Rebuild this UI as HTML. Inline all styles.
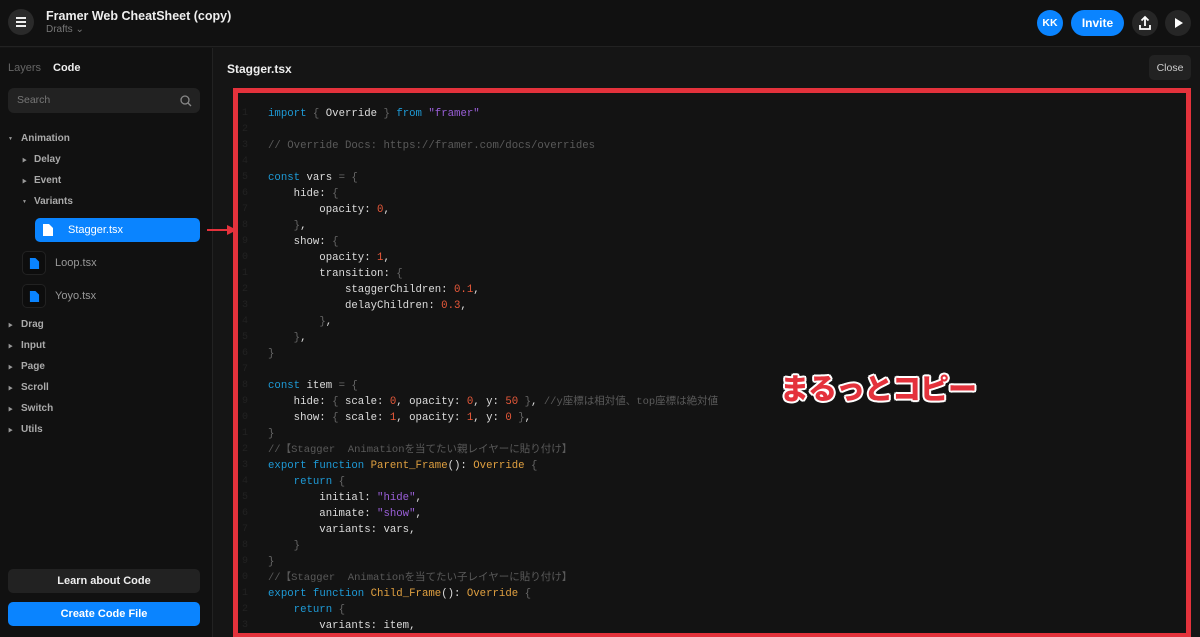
<!DOCTYPE html>
<html><head><meta charset="utf-8">
<style>
*{margin:0;padding:0;box-sizing:border-box}
body{width:1200px;height:637px;overflow:hidden;background:#151515;font-family:"Liberation Sans","Noto Sans CJK JP",sans-serif;color:#ddd;position:relative}
.top{position:absolute;left:0;top:0;width:1200px;height:47px;background:#111;border-bottom:1px solid #222}
.menu{position:absolute;left:8px;top:9px;width:26px;height:26px;border-radius:13px;background:#2a2a2a}
.menu i{position:absolute;left:8px;width:10px;height:2px;background:#eee}
.title{position:absolute;left:46px;top:9px;font-size:12.5px;font-weight:bold;color:#eee}
.drafts{position:absolute;left:46px;top:24px;font-size:10px;color:#777}
.kk{position:absolute;left:1037px;top:10px;width:26px;height:26px;border-radius:13px;background:#0a84ff;color:#fff;font-size:10.5px;font-weight:bold;text-align:center;line-height:26px}
.invite{position:absolute;left:1071px;top:10px;width:53px;height:26px;border-radius:13px;background:#0a84ff;color:#fff;font-size:12px;font-weight:bold;text-align:center;line-height:26px}
.circ{position:absolute;top:10px;width:26px;height:26px;border-radius:13px;background:#262626}
.side{position:absolute;left:0;top:48px;width:213px;height:589px;background:#111;border-right:1px solid #222}
.tab{position:absolute;font-size:11px}
.search{position:absolute;left:8px;width:192px;height:25px;border-radius:6px;background:#222;color:#777;font-size:10.5px;line-height:25px;padding-left:9px}
.tree{position:absolute;font-size:10px;color:#aaa;font-weight:bold}
.tri{position:absolute;font-size:5px;color:#999}
.sel{position:absolute;left:35px;top:218px;width:165px;height:24px;border-radius:5px;background:#0a84ff;color:#fff;font-size:11px;line-height:24px;padding-left:33px}
.fi{position:absolute;width:24px;height:24px;border:1px solid #222;border-radius:5px;background:#0d0d0d}
.fname{position:absolute;font-size:11px;color:#999}
.btn{position:absolute;left:8px;width:192px;height:24px;border-radius:5px;font-size:11px;text-align:center;line-height:24px;font-weight:bold}
.hdr{position:absolute;left:227px;top:62px;font-size:12px;font-weight:bold;color:#eee}
.close{position:absolute;left:1149px;top:55px;width:42px;height:25px;border-radius:5px;background:#222;color:#ccc;font-size:10.5px;text-align:center;line-height:26px}
.box{position:absolute;left:233px;top:88px;width:958px;height:549px;border:5px solid #e4323c;border-bottom:4px solid #e4323c;background:#131313;overflow:hidden}
.code{position:absolute;left:0;top:13px;font-family:"Liberation Mono","Noto Sans CJK JP",monospace;font-size:10.7px;line-height:16px;color:#ddd;white-space:pre}
.ln{position:absolute;left:0;top:13px;font-family:"Liberation Mono",monospace;font-size:10px;line-height:16px;color:#222;white-space:pre;text-align:right;width:10px}
.k{color:#1e9ad6}.s{color:#9a5fd8}.c{color:#5a5a5a}.n{color:#e8593a}.f{color:#e0a040}.p{color:#666}
.big{position:absolute;left:780px;top:366px;font-size:29px;font-weight:900;color:#e4323c;text-shadow:2px 0 0 #fff,-2px 0 0 #fff,0 2px 0 #fff,0 -2px 0 #fff,1.5px 1.5px 0 #fff,-1.5px 1.5px 0 #fff,1.5px -1.5px 0 #fff,-1.5px -1.5px 0 #fff;font-family:"Noto Sans CJK JP",sans-serif;letter-spacing:-1px}
</style></head><body>
<div class="top">
 <div class="menu"><i style="top:8px"></i><i style="top:12px"></i><i style="top:16px"></i></div>
 <div class="title">Framer Web CheatSheet (copy)</div>
 <div class="drafts">Drafts ⌄</div>
 <div class="kk">KK</div>
 <div class="invite">Invite</div>
 <div class="circ" style="left:1132px"><svg width="26" height="26" viewBox="0 0 26 26"><path d="M13 7v9M9.5 10.5L13 7l3.5 3.5M8 15v4h10v-4" stroke="#fff" stroke-width="1.8" fill="none"/></svg></div>
 <div class="circ" style="left:1165px"><svg width="26" height="26" viewBox="0 0 26 26"><path d="M10 8l8 5-8 5z" fill="#fff"/></svg></div>
</div>
<div class="side">
 <div class="tab" style="left:8px;top:14px;color:#666">Layers</div>
 <div class="tab" style="left:53px;top:14px;color:#eee;font-weight:bold">Code</div>
 <div class="search" style="top:40px">Search<svg style="position:absolute;right:8px;top:7px" width="12" height="12" viewBox="0 0 12 12"><circle cx="5" cy="5" r="4" stroke="#888" stroke-width="1.3" fill="none"/><path d="M8 8l3 3" stroke="#888" stroke-width="1.3"/></svg></div>
</div>
<div class="tri" style="left:8px;top:136px">▼</div><div class="tree" style="left:21px;top:133px">Animation</div>
<div class="tri" style="left:22px;top:157px">▶</div><div class="tree" style="left:34px;top:154px">Delay</div>
<div class="tri" style="left:22px;top:178px">▶</div><div class="tree" style="left:34px;top:175px">Event</div>
<div class="tri" style="left:22px;top:199px">▼</div><div class="tree" style="left:34px;top:196px">Variants</div>
<div class="sel">Stagger.tsx</div>
<svg style="position:absolute;left:42px;top:223px" width="12" height="14" viewBox="0 0 12 14"><path d="M1 1h6l4 4v8H1z" fill="#fff"/></svg>
<div class="fi" style="left:22px;top:251px"></div><svg style="position:absolute;left:29px;top:257px" width="11" height="13" viewBox="0 0 12 14"><path d="M1 1h6l4 4v8H1z" fill="#0a84ff"/></svg><div class="fname" style="left:55px;top:257px">Loop.tsx</div>
<div class="fi" style="left:22px;top:284px"></div><svg style="position:absolute;left:29px;top:290px" width="11" height="13" viewBox="0 0 12 14"><path d="M1 1h6l4 4v8H1z" fill="#0a84ff"/></svg><div class="fname" style="left:55px;top:290px">Yoyo.tsx</div>
<div class="tri" style="left:8px;top:322px">▶</div><div class="tree" style="left:21px;top:319px">Drag</div>
<div class="tri" style="left:8px;top:343px">▶</div><div class="tree" style="left:21px;top:340px">Input</div>
<div class="tri" style="left:8px;top:364px">▶</div><div class="tree" style="left:21px;top:361px">Page</div>
<div class="tri" style="left:8px;top:385px">▶</div><div class="tree" style="left:21px;top:382px">Scroll</div>
<div class="tri" style="left:8px;top:406px">▶</div><div class="tree" style="left:21px;top:403px">Switch</div>
<div class="tri" style="left:8px;top:427px">▶</div><div class="tree" style="left:21px;top:424px">Utils</div>
<div class="btn" style="top:569px;background:#222;color:#eee">Learn about Code</div>
<div class="btn" style="top:602px;background:#0a84ff;color:#fff">Create Code File</div>
<svg style="position:absolute;left:207px;top:224px" width="32" height="12" viewBox="0 0 32 12"><path d="M0 6h22" stroke="#e4323c" stroke-width="2"/><path d="M20 1l10 5-10 5z" fill="#e4323c"/></svg>
<div class="hdr">Stagger.tsx</div>
<div class="close">Close</div>
<div class="box">
<div class="ln">1
2
3
4
5
6
7
8
9
0
1
2
3
4
5
6
7
8
9
0
1
2
3
4
5
6
7
8
9
0
1
2
3</div>
<div class="code" style="left:30px"><span class="k">import</span> <span class="p">{</span> Override <span class="p">}</span> <span class="k">from</span> <span class="s">"framer"</span>

<span class="c">// Override Docs: https://framer.com/docs/overrides</span>

<span class="k">const</span> vars <span class="p">=</span> <span class="p">{</span>
    hide: <span class="p">{</span>
        opacity: <span class="n">0</span>,
    <span class="p">}</span>,
    show: <span class="p">{</span>
        opacity: <span class="n">1</span>,
        transition: <span class="p">{</span>
            staggerChildren: <span class="n">0.1</span>,
            delayChildren: <span class="n">0.3</span>,
        <span class="p">}</span>,
    <span class="p">}</span>,
<span class="p">}</span>

<span class="k">const</span> item <span class="p">=</span> <span class="p">{</span>
    hide: <span class="p">{</span> scale: <span class="n">0</span>, opacity: <span class="n">0</span>, y: <span class="n">50</span> <span class="p">}</span>, <span class="c" style="font-size:10.5px">//y座標は相対値、top座標は絶対値</span>
    show: <span class="p">{</span> scale: <span class="n">1</span>, opacity: <span class="n">1</span>, y: <span class="n">0</span> <span class="p">}</span>,
<span class="p">}</span>
<span class="c" style="font-size:10.5px">//【Stagger  Animationを当てたい親レイヤーに貼り付け】</span>
<span class="k">export</span> <span class="k">function</span> <span class="f">Parent_Frame</span>(): <span class="f">Override</span> <span class="p">{</span>
    <span class="k">return</span> <span class="p">{</span>
        initial: <span class="s">"hide"</span>,
        animate: <span class="s">"show"</span>,
        variants: vars,
    <span class="p">}</span>
<span class="p">}</span>
<span class="c" style="font-size:10.5px">//【Stagger  Animationを当てたい子レイヤーに貼り付け】</span>
<span class="k">export</span> <span class="k">function</span> <span class="f">Child_Frame</span>(): <span class="f">Override</span> <span class="p">{</span>
    <span class="k">return</span> <span class="p">{</span>
        variants: item,</div>
</div>
<div class="big">まるっとコピー</div>
</body></html>
